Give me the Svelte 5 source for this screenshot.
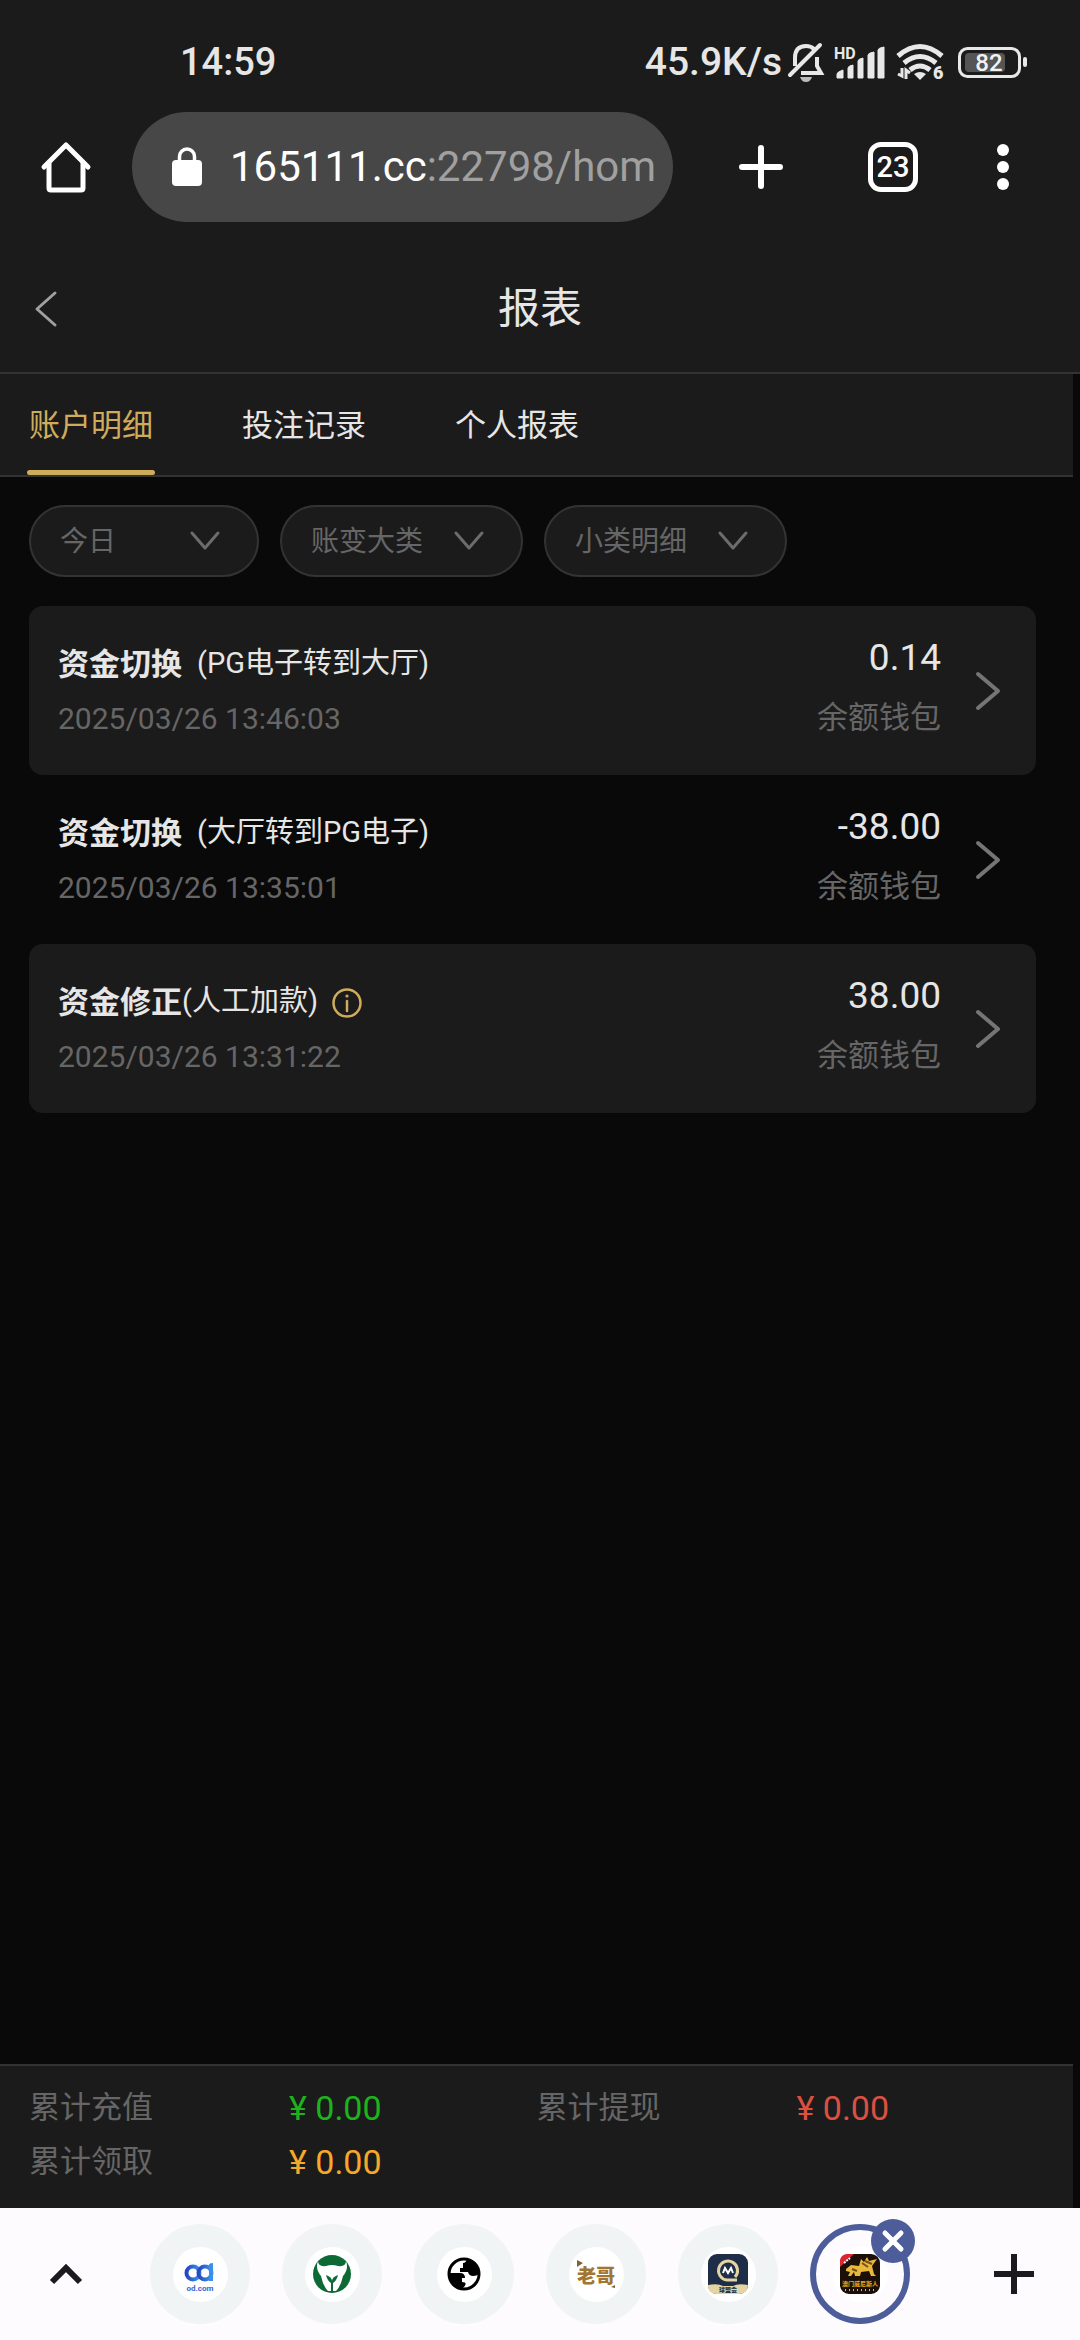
<script>
  const tabs = ['账户明细', '投注记录', '个人报表'];
  let activeTab = $state('账户明细');

  const filters = [
    { id: 'day', label: '日期', value: '今日', narrow: true },
    { id: 'kind', label: '大类', value: '账变大类', narrow: false },
    { id: 'detail', label: '小类', value: '小类明细', narrow: false }
  ];

  const records = [
    { title: '资金切换', note: '(PG电子转到大厅)', time: '2025/03/26 13:46:03', amount: '0.14', wallet: '余额钱包', info: false },
    { title: '资金切换', note: '(大厅转到PG电子)', time: '2025/03/26 13:35:01', amount: '-38.00', wallet: '余额钱包', info: false },
    { title: '资金修正', note: '(人工加款)', time: '2025/03/26 13:31:22', amount: '38.00', wallet: '余额钱包', info: true }
  ];

  const totals = [
    { label: '累计充值', value: '¥ 0.00', tone: 'green' },
    { label: '累计提现', value: '¥ 0.00', tone: 'red' },
    { label: '累计领取', value: '¥ 0.00', tone: 'orange' }
  ];

  const sites = ['od', 'bull', 'globe', 'laoge', 'league', 'lion'];
</script>

<div class="screen">
  <div class="status">
    <span class="clock">14:59</span>
    <div class="indicators">
      <span class="speed">45.9K/s</span>
      <svg class="bell" width="36" height="40" viewBox="0 0 36 40" fill="none" stroke="#e8e8e8" stroke-width="4">
        <path d="M7 24V16C7 8 11 4 18 4c3 0 6 1 8 3M29 15v9l4 7H13" />
        <path d="M2 33 32 3" stroke-linecap="round" />
        <path d="M12 35h12c-1 3-3 5-6 5s-5-2-6-5z" fill="#bbb" stroke="none" />
      </svg>
      <svg class="signal" width="52" height="36" viewBox="0 0 52 36" fill="#e8e8e8">
        <text x="0" y="15" font-size="16" font-weight="700">HD</text>
        <path d="M3 34v-4q0-2 6-4v8zM14 34V24q0-2 5-3v13zM24 34V17q0-2 5-3v20zM34 34V11q0-2 6-3v26zM44 34V6q0-2 6-3v31z" stroke="#e8e8e8" stroke-linejoin="round" />
      </svg>
      <svg class="wifi" width="48" height="38" viewBox="0 0 48 38" fill="none" stroke="#e8e8e8" stroke-width="5">
        <path d="M2 13Q24-6 46 13M8 20q16-13 32 0M14 27q10-8 20 0" />
        <path d="M18 31q6-4 12 0l-6 6z" fill="#e8e8e8" stroke="none" />
        <path d="M6 25v8l-4-2M10 36v-9l4 3" stroke-width="3" />
        <text x="37" y="36" font-size="18" font-weight="900" fill="#e8e8e8" stroke="none">6</text>
      </svg>
      <svg class="battery" width="70" height="32" viewBox="0 0 70 32">
        <rect x="1.500" y="2.500" width="60" height="28" rx="8" fill="none" stroke="#e8e8e8" stroke-width="3" />
        <rect x="7" y="7" width="40" height="19" rx="4" fill="#555" />
        <rect x="65" y="11" width="4" height="10" rx="2" fill="#e8e8e8" />
        <text x="31" y="25" text-anchor="middle" font-size="24" font-weight="500" fill="#f2f2f2">82</text>
      </svg>
    </div>
  </div>

  <nav class="toolbar" aria-label="浏览器">
    <button class="tool" aria-label="主页">
      <svg width="52" height="52" viewBox="0 0 52 52" fill="none" stroke="#fff" stroke-width="5" stroke-linecap="round" stroke-linejoin="round">
        <path d="M4 26 26 4l22 22" />
        <path d="M9 22v25q0 2 2 2h30q2 0 2-2V22" />
      </svg>
    </button>
    <button class="address" aria-label="网址">
      <svg width="30" height="40" viewBox="0 0 30 40">
        <rect y="13" width="30" height="26" rx="4" fill="#fff" />
        <path d="M7.500 15V9.500a7.500 7.500 0 0 1 15 0V15" fill="none" stroke="#fff" stroke-width="3.500" />
      </svg>
      <span class="url">165111.cc<span class="path">:22798/hom</span></span>
    </button>
    <button class="tool first" aria-label="新标签页">
      <svg width="44" height="44" viewBox="0 0 44 44" stroke="#fff" stroke-width="6" stroke-linecap="round"><path d="M22 3v38M3 22h38" /></svg>
    </button>
    <button class="tool" aria-label="切换标签页">
      <span class="count">23</span>
    </button>
    <button class="tool more" aria-label="更多">
      <svg width="12" height="46" viewBox="0 0 12 46" fill="#fff"><circle cx="6" cy="6" r="6" /><circle cx="6" cy="23" r="6" /><circle cx="6" cy="40" r="6" /></svg>
    </button>
  </nav>

  <header class="heading">
    <button class="back" aria-label="返回">
      <svg width="22" height="36" viewBox="0 0 22 36" fill="none" stroke="#a0a0a0" stroke-width="3" stroke-linecap="round" stroke-linejoin="round"><path d="M20 2 2 18l18 16" /></svg>
    </button>
    <h1>报表</h1>
  </header>

  <div class="body">
    <div class="tabs" role="tablist">
      {#each tabs as tab}
        <button role="tab" aria-selected={tab === activeTab} class:active={tab === activeTab} onclick={() => (activeTab = tab)}>{tab}</button>
      {/each}
    </div>

    <main>
      <div class="filters">
        {#each filters as filter (filter.id)}
          <label class="filter" class:narrow={filter.narrow}>
            <select aria-label={filter.label}><option>{filter.value}</option></select>
            <svg width="30" height="20" viewBox="0 0 30 20" fill="none" stroke="#6c6c6c" stroke-width="3" stroke-linecap="round" stroke-linejoin="round"><path d="m2 2 13 15L28 2" /></svg>
          </label>
        {/each}
      </div>

      <ul class="records">
        {#each records as record (record.time)}
          <li>
            <div class="what">
              <div class="line">
                <strong>{record.title}</strong>
                <span class="note" class:close={record.info}>{record.note}</span>
                {#if record.info}
                  <button class="info" aria-label="说明">
                    <svg width="30" height="30" viewBox="0 0 30 30" fill="none" stroke="#cfac5c" stroke-width="2.500"><circle cx="15" cy="15" r="13.500" /><path d="M15 13v10" stroke-linecap="round" /><circle cx="15" cy="8" r="1.600" fill="#cfac5c" stroke="none" /></svg>
                  </button>
                {/if}
              </div>
              <time>{record.time}</time>
            </div>
            <div class="sum">
              <span class="amount">{record.amount}</span>
              <span class="wallet">{record.wallet}</span>
            </div>
            <svg class="go" width="24" height="38" viewBox="0 0 24 38" fill="none" stroke="#757575" stroke-width="4" stroke-linecap="round" stroke-linejoin="round"><path d="m2 2 20 17L2 36" /></svg>
          </li>
        {/each}
      </ul>
    </main>

    <dl class="totals">
      {#each totals as total (total.label)}
        <div><dt>{total.label}</dt><dd class={total.tone}>{total.value}</dd></div>
      {/each}
    </dl>
  </div>

  <nav class="strip" aria-label="标签页组">
    <button class="tool" aria-label="展开">
      <svg width="34" height="22" viewBox="0 0 34 22" fill="none" stroke="#1b1b1f" stroke-width="6"><path d="M3 19 17 5l14 14" /></svg>
    </button>
    <div class="chips">
      {#each sites as site (site)}
        <button class="chip" class:current={site === 'lion'} aria-label={site}>
          <span class="disc">
            <svg width="40" height="40" viewBox="0 0 40 40">
              {#if site === 'od'}
                <defs><linearGradient id="blue" x2="1"><stop stop-color="#2548c0" /><stop offset="1" stop-color="#3a96ee" /></linearGradient></defs>
                <g fill="none" stroke="url(#blue)" stroke-width="4"><circle cx="13" cy="19" r="6.500" /><circle cx="25" cy="19" r="6.500" /></g>
                <path d="M29 11q0-2 4-2v18h-4z" fill="#3a8fea" />
                <text x="20" y="37" text-anchor="middle" font-size="8" font-weight="700" fill="#3565cf">od.com</text>
              {:else if site === 'bull'}
                <circle cx="20" cy="20" r="19" fill="#0d6a35" />
                <path d="M6 7q0 6 8 5 6-2 12 0 8 1 8-5 3 8-3 15-2 10-7 15h-8q-5-5-7-15-6-7-3-15z" fill="#fff" />
                <path d="M14 21q6 2 6 6 0-4 6-6-1 5-5 8v9h-2v-9q-4-3-5-8z" fill="#0d6a35" />
              {:else if site === 'globe'}
                <circle cx="20" cy="20" r="15" fill="#fff" stroke="#000" stroke-width="3" />
                <path d="M23 5q-1 4-4 4v5h-3v4h8q1 4 5 4 5 0 6-3Q34 7 23 5zM5 19h11q5 0 5 5h-3v4q6 0 2 5l-3 2Q5 32 5 19z" fill="#000" />
              {:else if site === 'laoge'}
                <path d="m1 6 6 3-6 4zM35 33l4-2v3z" fill="#7e6234" />
                <text x="20" y="29" text-anchor="middle" font-size="19" font-weight="900" fill="#a27632">老哥</text>
              {:else if site === 'league'}
                <rect width="40" height="40" rx="9" fill="#1e2d48" />
                <path d="M0 31q10-2 15 1h10q5-3 15-1-1 9-9 9H9q-9 0-9-9z" fill="#e5d3a3" />
                <path d="M27 23a9.500 9.500 0 1 0-8 3h10" fill="none" stroke="#e5d3a3" stroke-width="3" />
                <path d="m15 19 2-5 3 5 3-5 2 5" fill="none" stroke="#fff" stroke-width="2" />
                <text x="20" y="38" text-anchor="middle" font-size="6" font-weight="900" fill="#26334a">球盟会</text>
              {:else}
                <rect width="40" height="40" rx="9" fill="#1c0f08" />
                <path d="M0 13V8Q0 0 8 0h6z" fill="#d92632" />
                <path d="m4 9 6-5" stroke="#fff" stroke-width="2" stroke-dasharray="2 1" />
                <path d="m6 15 5-4 8 1 2-7 3 3 3-5 2 4 8-2-5 7 2 8 2 2h-5l-2-5-8 1-1 4h-5l-1-4-3 4H8l2-4-4-1z" fill="#e7b83b" />
                <path d="m12 15 5 2M22 9l6 4M25 7l7 3" stroke="#76501a" stroke-width="2" />
                <text x="20" y="32" text-anchor="middle" font-size="6" font-weight="700" fill="#efa51d">澳门威尼斯人</text>
                <path d="M5 36h30" stroke="#c8b68f" stroke-width="2" stroke-dasharray="1 3" />
              {/if}
            </svg>
          </span>
          {#if site === 'lion'}
            <span class="shut">
              <svg width="22" height="22" viewBox="0 0 22 22" stroke="#fff" stroke-width="5" stroke-linecap="round"><path d="m3 3 16 16M19 3 3 19" /></svg>
            </span>
          {/if}
        </button>
      {/each}
    </div>
    <button class="tool add" aria-label="添加">
      <svg width="40" height="40" viewBox="0 0 40 40" stroke="#1b1b1f" stroke-width="6"><path d="M20 0v40M0 20h40" /></svg>
    </button>
  </nav>
</div>

<style>
  :global(body) { margin: 0; background: #090909; }
  .screen {
    display: flex;
    flex-direction: column;
    min-height: 100vh;
    color: #e6e6e6;
    font-family: Roboto, "Noto Sans CJK SC", sans-serif;
  }
  button {
    display: flex;
    align-items: center;
    justify-content: center;
    padding: 0;
    border: 0;
    background: none;
    color: inherit;
    font: inherit;
  }
  svg { display: block; flex: none; overflow: visible; }

  .status {
    display: flex;
    justify-content: space-between;
    padding: 38px 52px 0 180px;
    background: #1b1b1b;
    font-size: 38px;
    font-weight: 500;
    line-height: 48px;
  }
  .indicators { display: flex; align-items: center; }
  .speed { margin-right: 6px; font-size: 39px; }
  .bell { margin-right: 10px; }
  .signal { margin-right: 10px; }
  .wifi { margin-right: 14px; }

  .toolbar {
    display: flex;
    align-items: center;
    padding: 26px 33px 24px 0;
    background: #1b1b1b;
  }
  .tool { flex: none; width: 132px; height: 110px; }
  .tool.first { margin-left: 22px; }
  .tool.more { width: 88px; }
  .address {
    flex: 1;
    min-width: 0;
    height: 110px;
    gap: 28px;
    padding: 0 21px 0 40px;
    border-radius: 55px;
    background: #474747;
    justify-content: flex-start;
  }
  .url {
    flex: 1;
    color: #fff;
    font-size: 42px;
    line-height: 60px;
    text-align: left;
    white-space: nowrap;
  }
  .path { color: #a0a0a0; }
  .count {
    width: 40px;
    border: 5px solid #fff;
    border-radius: 13px;
    color: #fff;
    font-size: 29px;
    font-weight: 500;
    line-height: 40px;
  }

  .heading {
    display: grid;
    grid-template-columns: 92px 1fr 92px;
    align-items: center;
    height: 126px;
    border-bottom: 2px solid #333;
    background: #1b1b1b;
  }
  .back { height: 100px; }
  h1 {
    margin: 0;
    font-size: 42px;
    font-weight: 400;
    line-height: 60px;
    text-align: center;
  }

  .body {
    flex: 1;
    display: flex;
    flex-direction: column;
    margin-right: 7px;
  }
  .tabs {
    display: flex;
    gap: 85px;
    padding: 0 27px;
    border-bottom: 2px solid #333;
    background: #1b1b1b;
  }
  .tabs button {
    position: relative;
    padding: 7px 2px 5px;
    font-size: 31px;
    line-height: 89px;
  }
  .tabs .active { color: #cfac5c; }
  .tabs .active::after {
    content: "";
    position: absolute;
    right: 0;
    bottom: 0;
    left: 0;
    height: 5px;
    border-radius: 3px;
    background: #cfac5c;
  }

  main { flex: 1; padding: 28px 37px 28px 29px; }
  .filters { display: flex; gap: 21px; margin-bottom: 29px; }
  .filter { display: grid; align-items: center; width: 243px; }
  .narrow { width: 230px; }
  .filter select, .filter svg { grid-area: 1 / 1; }
  .filter svg { justify-self: end; margin-right: 39px; pointer-events: none; }
  select {
    appearance: none;
    width: 100%;
    height: 72px;
    padding: 0 28px 0 29px;
    border: 2px solid #333;
    border-radius: 36px;
    background: #1b1b1b;
    color: #666;
    font: inherit;
    font-size: 28px;
  }

  .records { margin: 0; padding: 0; list-style: none; }
  li {
    display: flex;
    align-items: center;
    height: 169px;
    padding: 0 36px 0 29px;
    border-radius: 14px;
  }
  li:nth-child(odd) { background: #1b1b1b; }
  .what { flex: 1; }
  .line { display: flex; align-items: center; height: 52px; }
  strong { font-size: 31px; font-weight: 700; line-height: 48px; }
  .note { margin-left: 15px; padding-bottom: 4px; font-size: 29px; line-height: 44px; }
  .note.close { margin-left: 0; }
  .info { margin-left: 14px; }
  time { display: block; margin-top: 4px; color: #666; font-size: 30px; line-height: 48px; }
  .sum { display: flex; flex-direction: column; align-items: flex-end; gap: 12px; padding-bottom: 5px; }
  .amount { font-size: 37px; line-height: 48px; }
  .wallet { color: #666; font-size: 31px; line-height: 48px; }
  .go { margin-left: 35px; }

  .totals {
    display: grid;
    grid-template-columns: 1fr 1fr;
    margin: 0;
    padding: 15px 29px 19px;
    border-top: 2px solid #333;
    background: #1b1b1b;
    font-size: 31px;
    line-height: 54px;
  }
  .totals div { display: flex; }
  dt { width: 260px; color: #666; }
  dd { margin: 0; font-size: 34px; }
  .green { color: #1db31d; }
  .red { color: #dc5041; }
  .orange { color: #f5a82a; }

  .strip { display: flex; align-items: center; height: 132px; background: #fefbff; }
  .chips { display: flex; gap: 32px; margin-left: 18px; }
  .chip {
    position: relative;
    width: 100px;
    height: 100px;
    border-radius: 50%;
    background: #f1f4f5;
  }
  .chip.current { border: 6px solid #4c5d99; background: #fefbff; }
  .disc { display: grid; place-items: center; width: 55px; height: 55px; border-radius: 50%; background: #fff; }
  .shut {
    position: absolute;
    top: -11px;
    right: -11px;
    display: grid;
    place-items: center;
    width: 44px;
    height: 44px;
    border-radius: 50%;
    background: #4c5d99;
  }
  .add { margin-left: auto; }
</style>
